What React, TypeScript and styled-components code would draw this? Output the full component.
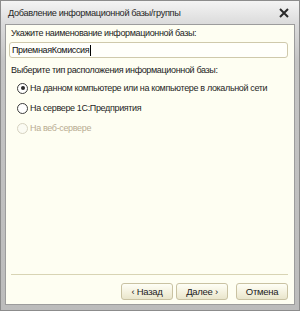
import React, { useState } from 'react';
import styled, { createGlobalStyle } from 'styled-components';

const FONT = `"Liberation Sans", Arial, sans-serif`

const GlobalStyle = createGlobalStyle`
  html, body {
    margin: 0;
    padding: 0;
    background: #9a9a9a;
  }
  body {
    font-family: ${FONT};
    font-size: 9px;
    letter-spacing: -0.35px;
  }
`

const Window = styled.div`
  width: 300px;
  height: 311px;
  box-sizing: border-box;
  display: flex;
  flex-direction: column;
  border: 1px solid #8c8c8c;
  background: linear-gradient(#f4f4f4 0px, #dcdcdc 22px, #c4c4c4 60px, #bcbcbc 100%);
`

const TitleBar = styled.div`
  height: 23px;
  display: flex;
  align-items: center;
  justify-content: space-between;
  padding: 0 9px 0 7px;
  box-sizing: border-box;
`

const Title = styled.span`
  font-size: 9.2px;
  color: #262626;
`

const CloseBtn = styled.span`
  width: 12px;
  height: 12px;
  display: flex;
  align-items: center;
  justify-content: center;
`

const Body = styled.div`
  flex: 1;
  margin: 0 4px 5px 4px;
  border: 1px solid #9c9c9c;
  background: #fefef2;
  display: flex;
  flex-direction: column;
  padding: 2px 6px 4px 3px;
`

const Label = styled.div<{ $gap?: number }>`
  line-height: 13px;
  color: #222;
  margin-top: ${p => p.$gap ?? 0}px;
  padding-left: 2px;
`

const NameBox = styled.div`
  margin-top: 2px;
  height: 16px;
  box-sizing: border-box;
  border: 1px solid #cfc9ac;
  border-radius: 3px;
  background: #fffffb;
  display: flex;
  align-items: center;
  padding-left: 2px;
  color: #111;
`

const Caret = styled.span`
  display: inline-block;
  width: 1px;
  height: 11px;
  background: #000;
  margin-left: 1px;
`

const RadioList = styled.div`
  margin-top: 1px;
  display: flex;
  flex-direction: column;
`

const RadioRow = styled.label<{ $disabled?: boolean }>`
  height: 20px;
  display: flex;
  align-items: center;
  padding-left: 8px;
  gap: 2px;
  white-space: nowrap;
  color: ${p => (p.$disabled ? '#b9ad92' : '#1e1e1e')};
  cursor: ${p => (p.$disabled ? 'default' : 'pointer')};
`

const Circle = styled.span<{ $checked?: boolean; $disabled?: boolean }>`
  width: 11px;
  height: 11px;
  flex: none;
  box-sizing: border-box;
  border-radius: 50%;
  border: 1px solid ${p => (p.$disabled ? '#d6d2c0' : '#3c3c3c')};
  background: ${p => (p.$disabled ? '#fbfbf3' : '#ffffff')};
  display: flex;
  align-items: center;
  justify-content: center;
  &::after {
    content: '';
    width: 4px;
    height: 4px;
    border-radius: 50%;
    background: #2a2a2a;
    display: ${p => (p.$checked ? 'block' : 'none')};
  }
`

const Spacer = styled.div`
  flex: 1;
`

const Separator = styled.div`
  height: 1px;
  margin-left: 2px;
  background: #d8d4b4;
`

const ButtonRow = styled.div`
  margin-top: 8px;
  display: flex;
  justify-content: flex-end;
`

const Btn = styled.button<{ $gap?: number }>`
  width: 52px;
  height: 17px;
  margin-left: ${p => p.$gap ?? 0}px;
  padding: 0;
  border: 1px solid #c9c2a2;
  border-radius: 3px;
  background: linear-gradient(#fefef6, #f3f0dc 60%, #e9e5cc);
  font-family: ${FONT};
  font-size: 9.5px;
  letter-spacing: -0.3px;
  color: #222;
`

const options = [
  { text: 'На данном компьютере или на компьютере в локальной сети', disabled: false },
  { text: 'На сервере 1С:Предприятия', disabled: false },
  { text: 'На веб-сервере', disabled: true },
]

const App: React.FC = () => {
  const [selected, setSelected] = useState(0)

  return (
    <>
      <GlobalStyle />
      <Window>
        <TitleBar>
          <Title>Добавление информационной базы/группы</Title>
          <CloseBtn>
            <svg width="10" height="10" viewBox="0 0 10 10">
              <path d="M1 1L9 9M9 1L1 9" stroke="#2a2a2a" strokeWidth="2" />
            </svg>
          </CloseBtn>
        </TitleBar>
        <Body>
          <Label>Укажите наименование информационной базы:</Label>
          <NameBox>
            ПриемнаяКомиссия<Caret />
          </NameBox>
          <Label $gap={6}>Выберите тип расположения информационной базы:</Label>
          <RadioList>
            {options.map((o, i) => (
              <RadioRow
                key={o.text}
                $disabled={o.disabled}
                onClick={() => !o.disabled && setSelected(i)}
              >
                <Circle $checked={selected === i} $disabled={o.disabled} />
                {o.text}
              </RadioRow>
            ))}
          </RadioList>
          <Spacer />
          <Separator />
          <ButtonRow>
            <Btn>‹ Назад</Btn>
            <Btn $gap={3}>Далее ›</Btn>
            <Btn $gap={8}>Отмена</Btn>
          </ButtonRow>
        </Body>
      </Window>
    </>
  )
}

export default App
